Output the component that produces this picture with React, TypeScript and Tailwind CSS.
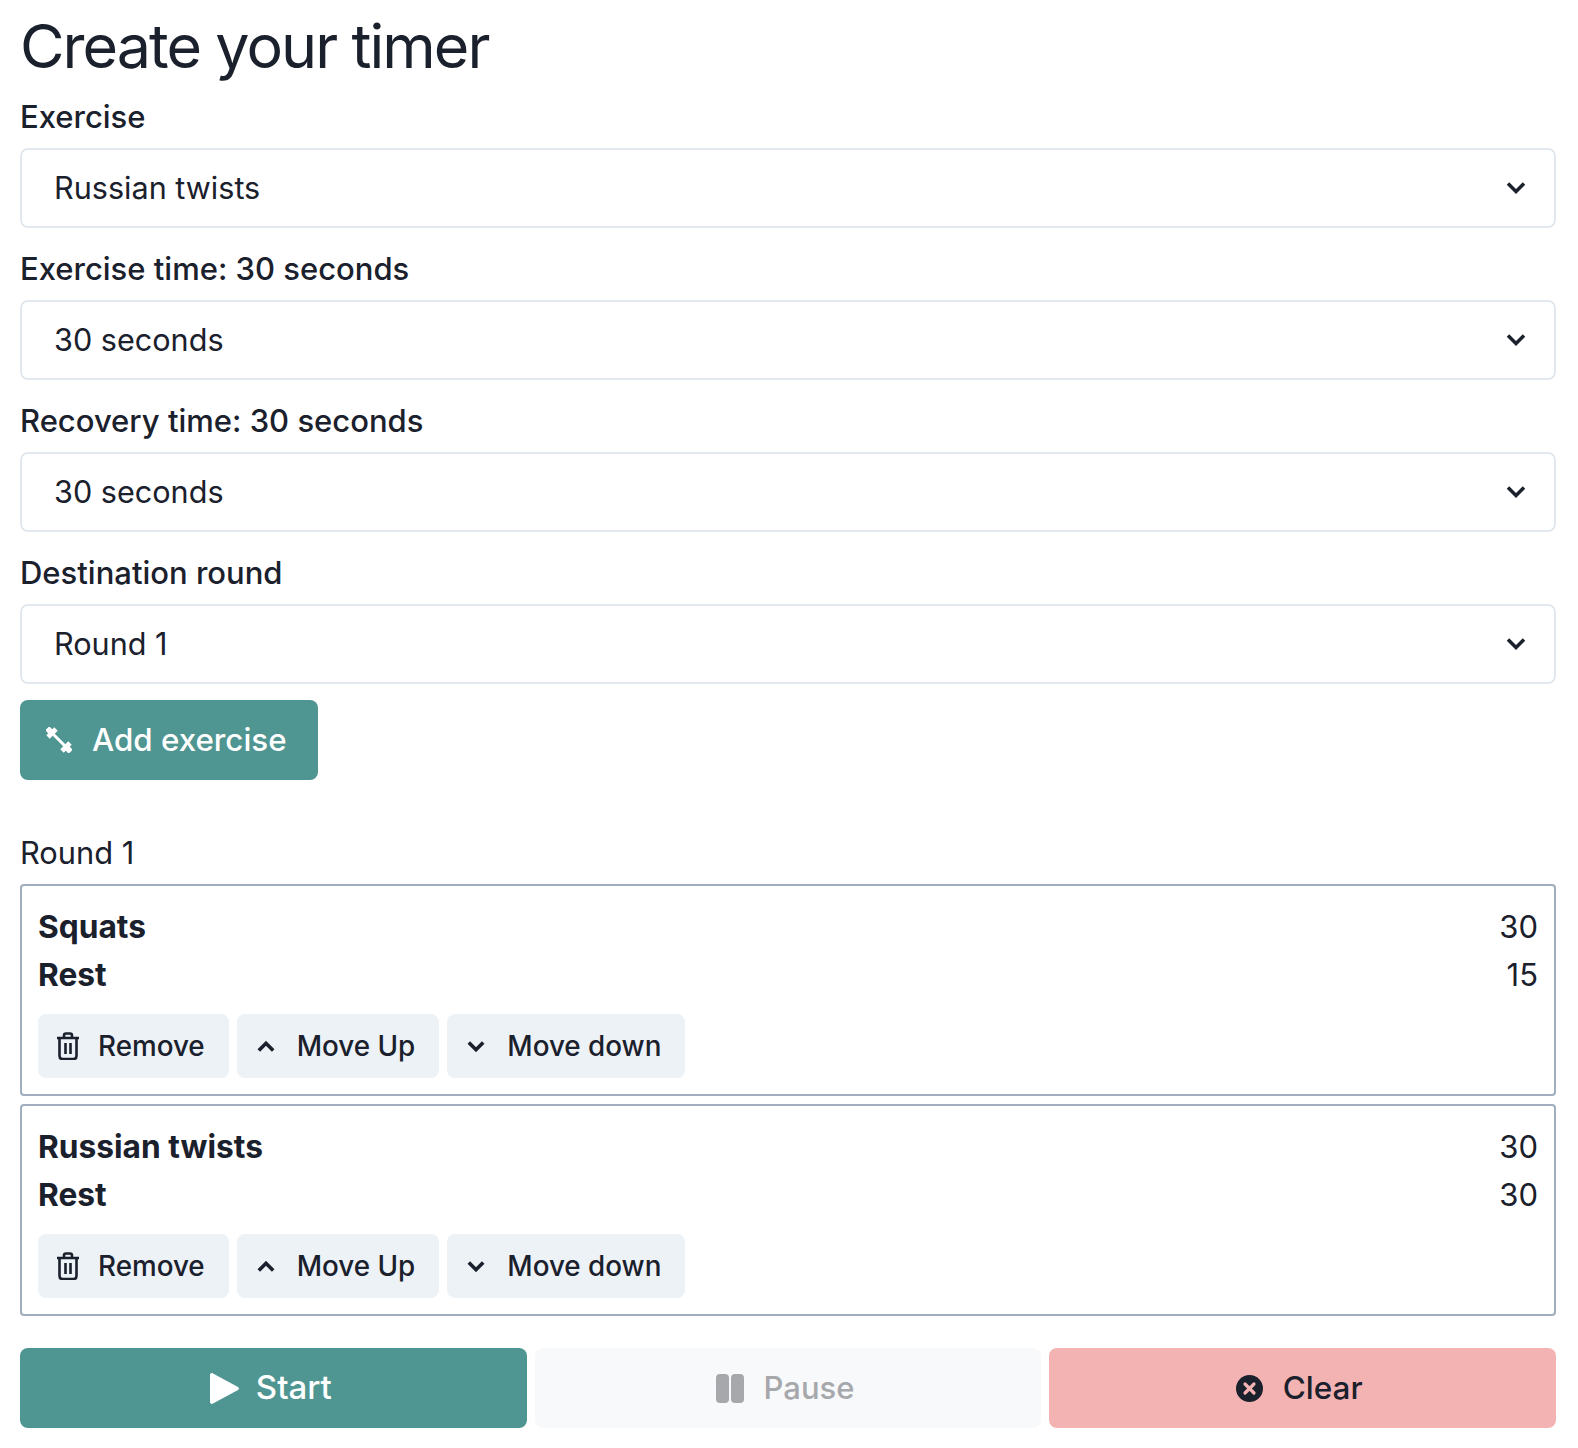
const fieldClass = "flex h-20 items-center justify-between rounded-lg border-2 border-[#e2e8f0] pl-[32px] pr-[28px] text-[30.6px]";

function ChevronIcon({ up = false, className, weight = "3.5" }: { up?: boolean; className: string; weight?: string }) {
  return (
    <svg viewBox="0 0 20 12" className={className} fill="none" stroke="currentColor" strokeWidth={weight}>
      <path d={up ? "M2 10.500L10 2.500L18 10.500" : "M2 1.500L10 9.500L18 1.500"} />
    </svg>
  );
}

function TrashIcon() {
  return (
    <svg viewBox="0 0 24 28" className="h-7 w-6" fill="none" stroke="currentColor" strokeWidth="2.6">
      <path d="M1 6H23M8 5.500V3.500Q8 1.500 10 1.500H14Q16 1.500 16 3.500V5.500M3.500 6V24Q3.500 27 6.500 27H17.500Q20.500 27 20.500 24V6M9.500 11V22M14.500 11V22" />
    </svg>
  );
}

function Field({ label, value }: { label: string; value: string }) {
  return (
    <div>
      <div className="mb-[10px] h-[44px] text-[31px] font-medium leading-[46px]">{label}</div>
      <div className={fieldClass}>
        <span className="pb-px">{value}</span>
        <ChevronIcon className="h-3 w-5" />
      </div>
    </div>
  );
}

function SmallButton({ icon, label, className }: { icon: React.ReactNode; label: string; className: string }) {
  return (
    <button type="button" className={`flex h-16 items-center rounded-lg bg-[#edf2f7] pr-6 text-[27.800px] font-medium ${className}`}>
      {icon}
      {label}
    </button>
  );
}

function ExerciseCard({ name, time, rest }: { name: string; time: number; rest: number }) {
  return (
    <div className="h-[212px] rounded-[4px] border-2 border-[#a0aec0] px-4 pt-[17px] text-[31px] leading-[48px]">
      <div className="flex justify-between">
        <span className="text-[31.700px] font-bold">{name}</span>
        <span>{time}</span>
      </div>
      <div className="flex justify-between">
        <span className="text-[31.700px] font-bold">Rest</span>
        <span>{rest}</span>
      </div>
      <div className="mt-[15px] flex gap-2">
        <SmallButton className="gap-[18px] pl-[18px]" icon={<TrashIcon />} label="Remove" />
        <SmallButton className="gap-[22px] pl-5" icon={<ChevronIcon up weight="4" className="h-[11px] w-[18px]" />} label="Move Up" />
        <SmallButton className="gap-[22px] pl-5" icon={<ChevronIcon weight="4" className="h-[11px] w-[18px]" />} label="Move down" />
      </div>
    </div>
  );
}

export default function App() {
  return (
    <div className="min-h-[1448px] bg-white pl-5 pr-[22px] font-['Inter',sans-serif] text-[#1a202c]">
      <h1 className="h-[94px] text-[61px] font-normal leading-[93px] tracking-[-1.95px]">Create your timer</h1>
      <div className="flex flex-col gap-[18px]">
        <Field label="Exercise" value="Russian twists" />
        <Field label="Exercise time: 30 seconds" value="30 seconds" />
        <Field label="Recovery time: 30 seconds" value="30 seconds" />
        <Field label="Destination round" value="Round 1" />
      </div>
      <button type="button" className="mt-4 flex h-20 items-center gap-5 rounded-lg bg-[#4f9592] pl-[26px] pr-[31px] text-[31.300px] font-medium text-white">
        <svg viewBox="0 0 26 26" className="h-[26px] w-[26px]" fill="none" stroke="white">
          <path d="M6 6L20 20" strokeWidth="3" />
          <path d="M2 10L10 2M1 5L5 1M16 24L24 16M21 25L25 21" strokeWidth="4.800" />
        </svg>
        Add exercise
      </button>
      <div className="mt-[51px] h-[53px] text-[30.800px] leading-[44px]">Round 1</div>
      <div className="flex flex-col gap-2">
        <ExerciseCard name="Squats" time={30} rest={15} />
        <ExerciseCard name="Russian twists" time={30} rest={30} />
      </div>
      <div className="mt-8 grid grid-cols-3 gap-2">
        <button type="button" className="flex h-20 items-center justify-center gap-[17px] rounded-lg bg-[#4f9592] pr-[5px] text-[33px] font-medium text-white">
          <svg viewBox="0 0 29 31" className="h-[31px] w-[29px]" fill="white">
            <path d="M0 2C0 .5 1.500 -.5 3 .5L28 14C29.300 14.800 29.300 16.200 28 17L3 30.500C1.500 31.500 0 30.500 0 29Z" />
          </svg>
          Start
        </button>
        <button type="button" className="flex h-20 items-center justify-center gap-5 rounded-lg bg-[#f8f9fb] pr-[6px] text-[31px] font-medium text-[#a6a8ab]">
          <svg viewBox="0 0 28 29" className="h-[29px] w-7" fill="#a6a8ab">
            <rect x="0" y="0" width="13" height="29" rx="4" />
            <rect x="15" y="0" width="13" height="29" rx="4" />
          </svg>
          Pause
        </button>
        <button type="button" className="flex h-20 items-center justify-center gap-5 rounded-lg bg-[#f4b3b3] pr-[7px] text-[31.500px] font-medium">
          <svg viewBox="0 0 27 27" className="h-[27px] w-[27px]">
            <circle cx="13.500" cy="13.500" r="13.500" fill="#1a202c" />
            <path d="M9 9L18 18M18 9L9 18" stroke="#f4b3b3" strokeWidth="3.200" strokeLinecap="round" />
          </svg>
          Clear
        </button>
      </div>
    </div>
  );
}
